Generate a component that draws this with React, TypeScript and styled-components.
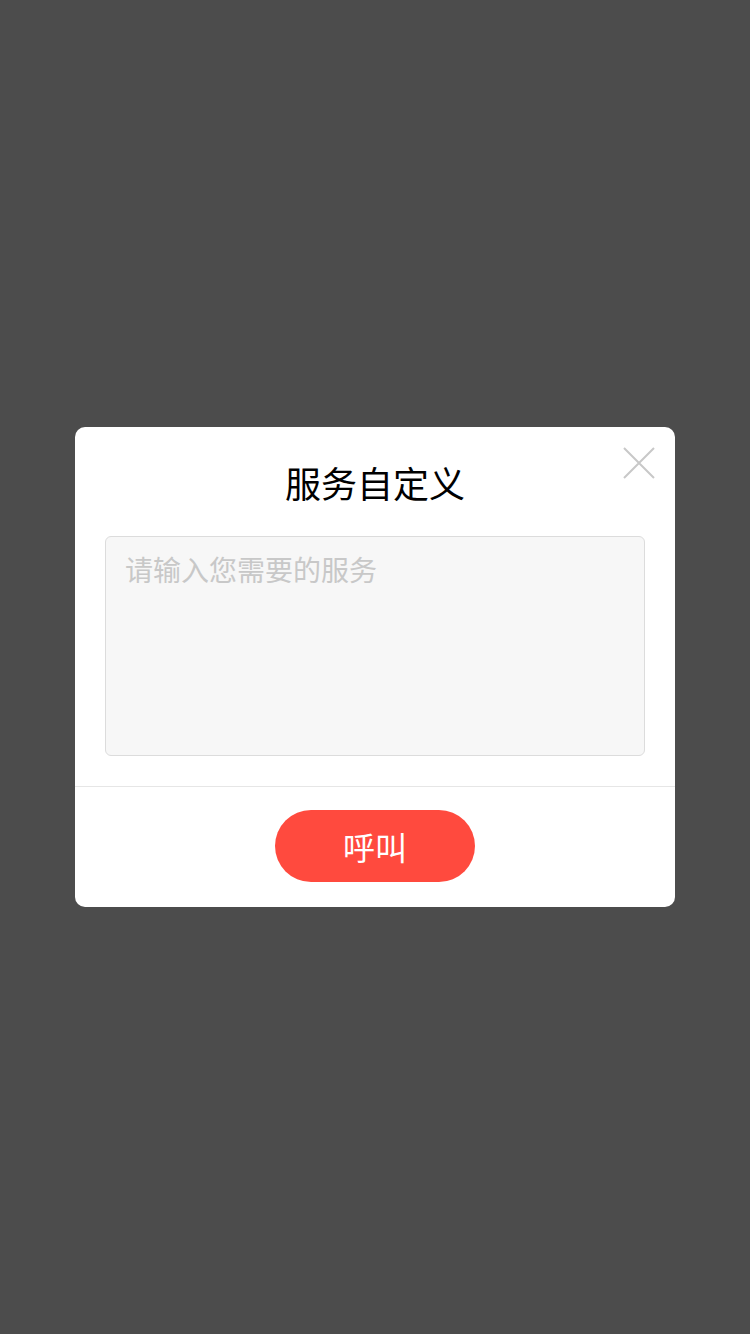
import * as React from 'react'
import styled, { createGlobalStyle } from 'styled-components'

const GlobalStyle = createGlobalStyle`
  html, body {
    margin: 0;
    padding: 0;
    background: #4c4c4c;
  }
  body {
    font-family: "Noto Sans CJK SC", "Noto Sans", sans-serif;
  }
`

const Overlay = styled.div`
  width: 750px;
  height: 1334px;
  background: #4c4c4c;
  display: flex;
  justify-content: center;
  padding-top: 427px;
  box-sizing: border-box;
`

const Dialog = styled.div`
  position: relative;
  width: 600px;
  height: 480px;
  background: #fff;
  border-radius: 10px;
  display: flex;
  flex-direction: column;
`

const Body = styled.div`
  padding: 37px 30px 30px;
  display: flex;
  flex-direction: column;
  align-items: center;
  border-bottom: 1px solid #e6e6e6;
`

const Title = styled.h2`
  margin: 0 0 36px;
  font-size: 36px;
  line-height: 36px;
  font-weight: 400;
  color: #000;
`

const CloseButton = styled.button`
  position: absolute;
  top: 20px;
  right: 20px;
  width: 32px;
  height: 32px;
  padding: 0;
  border: none;
  background: none;
  cursor: pointer;
`

const Input = styled.textarea`
  width: 540px;
  height: 220px;
  box-sizing: border-box;
  background: #f7f7f7;
  border: 1px solid #dcdcdc;
  border-radius: 6px;
  padding: 12px 19px;
  font-family: "Noto Sans CJK SC", sans-serif;
  font-size: 28px;
  line-height: 40px;
  color: #333;
  resize: none;
  outline: none;

  &::placeholder {
    color: #c8c8c8;
  }
`

const Footer = styled.div`
  flex: 1;
  display: flex;
  align-items: center;
  justify-content: center;
  padding-bottom: 2px;
`

const CallButton = styled.button`
  width: 200px;
  height: 72px;
  border: none;
  border-radius: 36px;
  background: #ff4a3e;
  color: #fff;
  font-family: "Noto Sans CJK SC", sans-serif;
  font-size: 32px;
  cursor: pointer;
`

const App = () => {
  const [text, setText] = React.useState('')

  return (
    <>
      <GlobalStyle />
      <Overlay>
        <Dialog>
          <CloseButton aria-label="关闭">
            <svg width="32" height="32" viewBox="0 0 32 32">
              <path d="M1 1 L31 31 M31 1 L1 31" stroke="#c8c8c8" strokeWidth="2" fill="none" />
            </svg>
          </CloseButton>
          <Body>
            <Title>服务自定义</Title>
            <Input
              placeholder="请输入您需要的服务"
              value={text}
              onChange={e => setText(e.target.value)}
            />
          </Body>
          <Footer>
            <CallButton>呼叫</CallButton>
          </Footer>
        </Dialog>
      </Overlay>
    </>
  )
}

export default App
